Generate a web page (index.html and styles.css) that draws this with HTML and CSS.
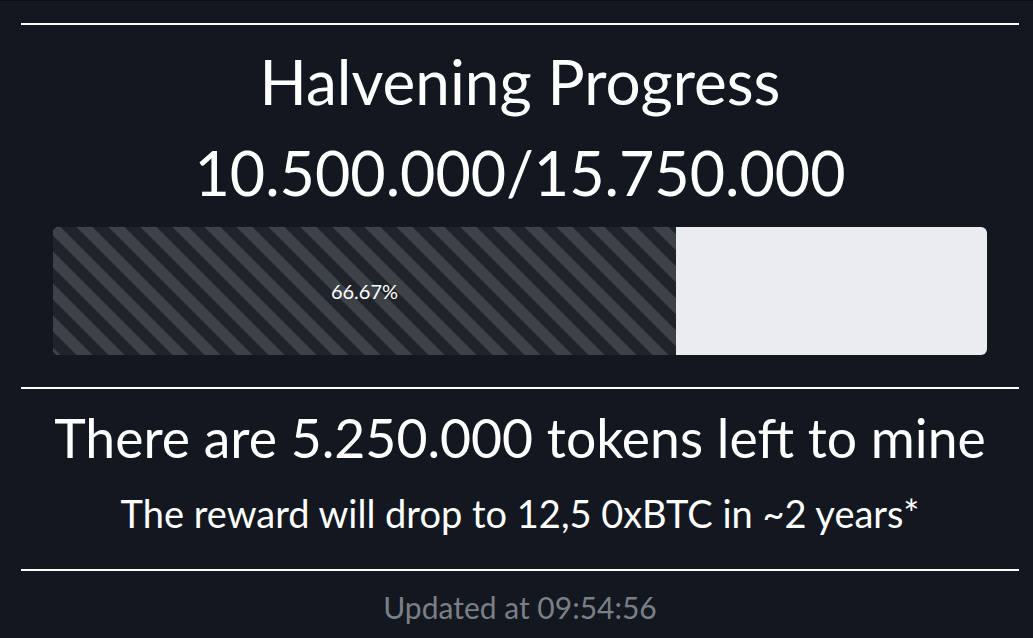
FILE: index.html
```html
<!DOCTYPE html>
<html lang="en">
<head>
<meta charset="utf-8">
<title>Halvening Progress</title>
<link rel="stylesheet" href="styles.css">
</head>
<body>
<main class="page">
  <hr class="rule rule-top">
  <section class="progress-section">
    <h1 class="title">Halvening Progress</h1>
    <h2 class="count">10.500.000/15.750.000</h2>
    <div class="bar">
      <div class="bar-fill" style="width: 66.7%"><span class="bar-label">66.67%</span></div>
    </div>
  </section>
  <hr class="rule rule-mid">
  <section class="summary">
    <h3 class="left">There are 5.250.000 tokens left to mine</h3>
    <p class="reward">The reward will drop to 12,5 0xBTC in ~2 years*</p>
  </section>
  <hr class="rule rule-bottom">
  <p class="updated">Updated at 09:54:56</p>
</main>
</body>
</html>
```
FILE: styles.css
```css
html, body {
  margin: 0;
  padding: 0;
  background: #131720;
}
body {
  border-top: 1px solid #0b0d11;
  font-family: "Lato", "Open Sans", sans-serif;
  color: #ffffff;
  height: 637px;
  overflow: hidden;
}
.page {
  display: flex;
  flex-direction: column;
  padding: 0 14px 0 21px;
  text-align: center;
}
.rule {
  margin: 0;
  border: 0;
  height: 2px;
  background: #ffffff;
}
.rule-top { margin-top: 22px; }
.progress-section {
  display: flex;
  flex-direction: column;
  align-items: center;
  padding: 19px 32px 0;
}
.title, .count {
  margin: 0;
  font-weight: 400;
  font-size: 62px;
  line-height: 74px;
  white-space: nowrap;
}
.count {
  margin-top: 18px;
  font-size: 61px;
}
.bar {
  align-self: stretch;
  margin-top: 17px;
  height: 128px;
  background: #ebecf0;
  border-radius: 6px;
  overflow: hidden;
  display: flex;
}
.bar-fill {
  height: 100%;
  display: flex;
  align-items: center;
  justify-content: center;
  background-color: #202329;
  background-image: linear-gradient(45deg,
    #3d4148 25%, transparent 25%, transparent 50%,
    #3d4148 50%, #3d4148 75%, transparent 75%, transparent);
  background-size: 32px 32px;
  background-position: 23px 0;
}
.bar-label {
  font-size: 20px;
  color: #ffffff;
}
.rule-mid { margin-top: 32px; }
.summary {
  display: flex;
  flex-direction: column;
  align-items: center;
  padding-top: 16px;
}
.left {
  margin: 0;
  font-weight: 400;
  font-size: 53.5px;
  line-height: 65px;
  white-space: nowrap;
}
.reward {
  margin: 20px 0 0;
  font-size: 38px;
  line-height: 46px;
  white-space: nowrap;
}
.rule-bottom { margin-top: 33px; }
.updated {
  margin: 18px 0 0;
  font-size: 30px;
  line-height: 36px;
  color: #7c7f86;
}
```
